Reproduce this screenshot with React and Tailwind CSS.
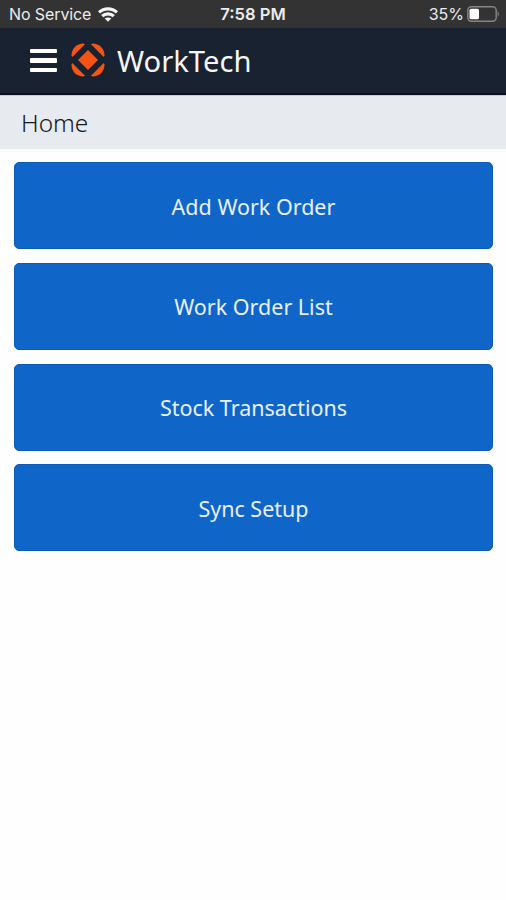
import React, { Component } from "react";

const menuItems = ["Add Work Order", "Work Order List", "Stock Transactions", "Sync Setup"];

class StatusBar extends Component {
  render() {
    return (
      <div className="grid grid-cols-3 items-center h-7 bg-[#333333] text-[#ececec] font-['Inter',sans-serif] text-base leading-7 pl-[9px] pr-[7px]">
        <div className="flex items-center gap-[7px] whitespace-nowrap">
          <span className="tracking-[-0.1px]">No Service</span>
          <svg width="20" height="15" viewBox="0 0 20 15" fill="none" stroke="#f4f4f4" strokeWidth="3.2">
            <path d="M1 5.4C6 0.7 14 0.7 19 5.4" />
            <path d="M4.2 9.2C7.4 6.1 12.6 6.1 15.8 9.2" />
            <path d="M10 14.8L6.7 11.6C8.6 10 11.4 10 13.3 11.6Z" fill="#f4f4f4" stroke="none" />
          </svg>
        </div>
        <div className="text-center font-semibold whitespace-nowrap text-[16.6px] pr-[2px]">7:58 PM</div>
        <div className="flex items-center justify-end gap-[3px]">
          <span>35%</span>
          <svg width="32" height="16" viewBox="0 0 32 16" fill="none">
            <rect x="0.8" y="0.8" width="28.4" height="14.4" rx="3.6" stroke="#858585" strokeWidth="1.4" />
            <rect x="2.5" y="2.7" width="9.5" height="10.6" rx="1.6" fill="#ffffff" />
            <path d="M30.6 5.3C32.2 6.3 32.2 9.7 30.6 10.7Z" fill="#858585" />
          </svg>
        </div>
      </div>
    );
  }
}

class Header extends Component {
  render() {
    return (
      <div className="flex items-center h-[67px] bg-[#192230] border-b-2 border-[#0c1020] pl-[30px]">
        <button className="flex flex-col gap-[5px] w-[27px]">
          <span className="h-[4.5px] w-full bg-white rounded-[1px]"></span>
          <span className="h-[4.5px] w-full bg-white rounded-[1px]"></span>
          <span className="h-[4.5px] w-full bg-white rounded-[1px]"></span>
        </button>
        <svg className="ml-[14px] mb-[2px]" width="34" height="34" viewBox="0 0 34 34" fill="#f55414">
          <path d="M17 7L27 17L17 27L7 17Z" />
          <path d="M0.5 12.5C0.5 5.5 5.5 0.5 12.5 0.5L14 1.3L1.3 14Z" />
          <path d="M21.5 0.5C28.5 0.5 33.5 5.5 33.5 12.5L32.7 14L20 1.3Z" />
          <path d="M33.5 21.5C33.5 28.5 28.5 33.5 21.5 33.5L20 32.7L32.7 20Z" />
          <path d="M12.5 33.5C5.5 33.5 0.5 28.5 0.5 21.5L1.3 20L14 32.7Z" />
        </svg>
        <h1 className="ml-3 pt-[2px] text-[#f4f6f8] text-[29.2px] leading-none">WorkTech</h1>
      </div>
    );
  }
}

class App extends Component {
  render() {
    return (
      <div className="w-full min-h-screen bg-[#fefefe] font-['Noto_Sans',sans-serif]">
        <StatusBar />
        <Header />
        <div className="flex items-center h-[54px] bg-[#e7ebef] border-t border-[#c9ccd6] pt-[2px] pl-[21px] text-[#14181f] text-[24.4px] font-light">
          Home
        </div>
        <div className="flex flex-col gap-[13.7px] pt-[13.2px] pl-[14px] pr-[13px]">
          {menuItems.map((item) => (
            <button
              key={item}
              className="h-[87px] rounded-[5px] bg-[#1065c8] border border-[#0c5ab9] pt-[2px] text-[#e8f1fb] text-[21.5px]"
            >
              {item}
            </button>
          ))}
        </div>
      </div>
    );
  }
}

export default App;
